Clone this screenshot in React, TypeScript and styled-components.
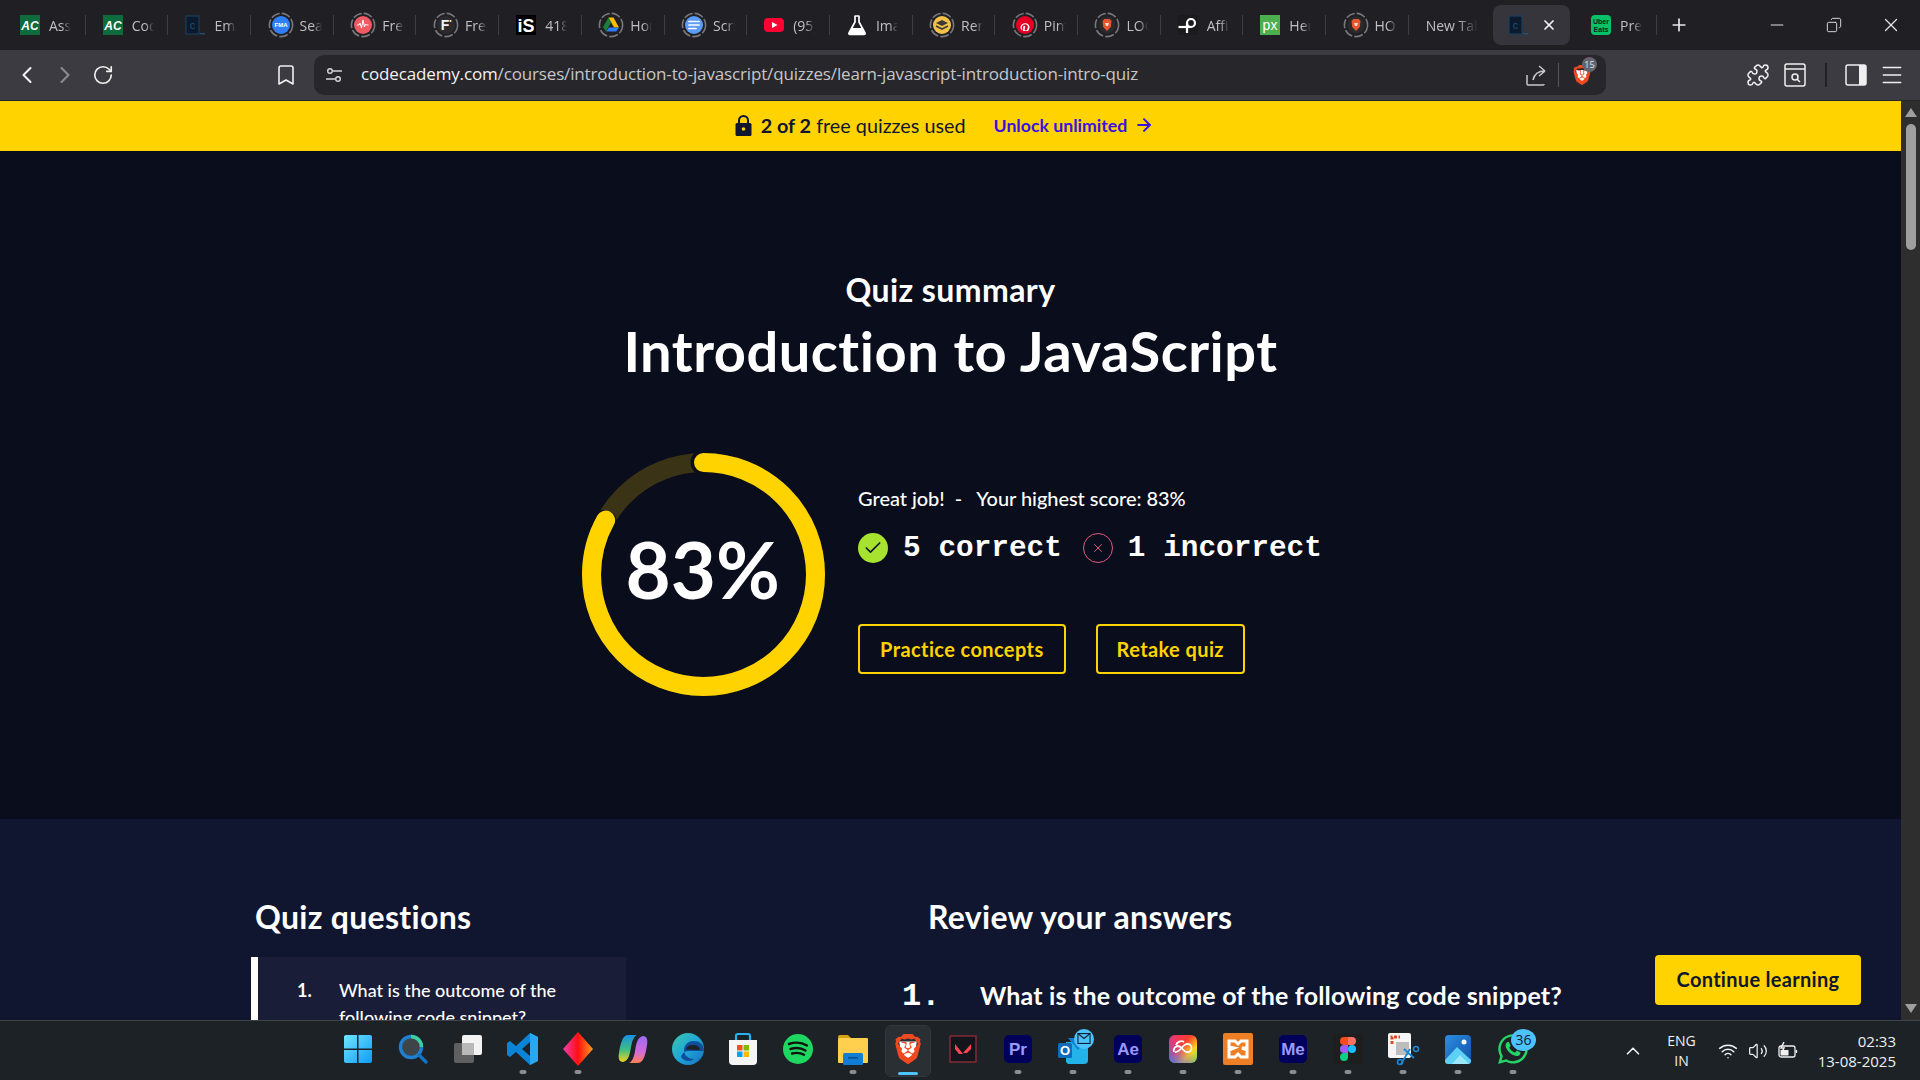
import React from "react";
import styled, { createGlobalStyle } from "styled-components";
import {
  ChevronLeft, ChevronRight, RotateCw, Bookmark, Puzzle, Menu, X, Plus, Minus,
  Copy, Wifi, Volume2, ChevronUp, ArrowRight, Check,
} from "lucide-react";
import { SiBrave } from "react-icons/si";
import { FaPinterestP, FaWhatsapp } from "react-icons/fa";

const Global = createGlobalStyle`
  html, body { margin: 0; padding: 0; overflow: hidden; background: #0a0d1c; }
  * { box-sizing: border-box; }
`;

const sans = `"Lato", "Liberation Sans", sans-serif`;
const ui = `"Open Sans", "Noto Sans", sans-serif`;
const mono = `"Liberation Mono", "DejaVu Sans Mono", monospace`;

const Shell = styled.div`
  width: 100%; height: 100vh; display: flex; flex-direction: column; overflow: hidden; position: relative;
  font-family: ${sans}; font-variant-ligatures: none;
`;
const TabStrip = styled.div`
  height: 50px; flex: none; background: #1f1f24; display: flex; align-items: center; padding-left: 3px;
`;
const Tab = styled.div<{ $active?: boolean; $sep?: boolean }>`
  width: 82.7px; flex: none; display: flex; align-items: center; gap: 9px; padding-left: 17px; position: relative;
  height: ${p => (p.$sep ? 20 : 40)}px;
  border-right: 1px solid ${p => (p.$sep ? "#3e3e44" : "transparent")};
  ${p => (p.$active ? "width: 77px; margin: 0 3.7px 0 2px; padding-left: 15px; border-radius: 8px; background: #35353b;" : "")}
`;
const Fav = styled.span<{ $ring?: boolean }>`
  width: 20px; height: 20px; flex: none; display: flex; align-items: center; justify-content: center; position: relative;
  margin-left: ${p => (p.$ring ? 2.5 : 0)}px;
  svg { flex: none; }
`;
const TabText = styled.span<{ $wide?: boolean }>`
  font: 400 14px ${ui}; color: #c0c0c4; white-space: nowrap; overflow: hidden; width: 22px; flex: none;
  -webkit-mask-image: linear-gradient(90deg, #000 60%, transparent);
  mask-image: linear-gradient(90deg, #000 60%, transparent);
  ${p => (p.$wide ? "width: 52px;" : "")}
`;
const CloseTab = styled.span`
  display: flex; margin-left: 4px; color: #f2f2f2;
`;
const PlusBtn = styled.div`
  display: flex; margin-left: 12px; color: #e8e8e8;
`;
const WinControls = styled.div`
  margin-left: auto; display: flex; color: #e4e4e4; height: 50px; align-items: center; padding-right: 1px;
`;
const WinBtn = styled.div`
  width: 57px; display: flex; justify-content: center; align-items: center;
`;
const Toolbar = styled.div`
  height: 51px; flex: none; background: #3b3b41; display: flex; align-items: flex-start; padding-top: 5px; border-bottom: 1px solid #26262b;
  color: #f0f0f0;
`;
const NavGroup = styled.div`
  display: flex; align-items: center; height: 40px; width: 314px; padding-left: 12px;
`;
const NavBtn = styled.div<{ $dim?: boolean; $ml?: number }>`
  width: 30px; height: 30px; display: flex; align-items: center; justify-content: center; margin-right: 8px;
  color: ${p => (p.$dim ? "#8a8a8f" : "#f0f0f0")};
  margin-left: ${p => p.$ml ?? 0}px;
`;
const UrlBar = styled.div`
  width: 1292px; height: 40px; background: #26262b; border-radius: 10px; display: flex; align-items: center; padding-left: 11px; flex: none;
`;
const UrlText = styled.div`
  font: 400 17px/38px ${ui}; height: 40px; color: #c6c6ca; margin-left: 18px; letter-spacing: -0.15px; white-space: nowrap;
  b { font-weight: 400; color: #f2f2f2; }
`;
const UrlRight = styled.div`
  margin-left: auto; display: flex; align-items: center; color: #c9c9cc; padding-right: 11px;
`;
const UrlSep = styled.div`
  width: 1px; height: 24px; background: #55555a; margin: 0 13px 0 11px;
`;
const ShieldWrap = styled.div`
  position: relative; width: 20px; height: 26px; margin-right: 3px; display: flex; align-items: center; justify-content: center;
`;
const Count = styled.span`
  position: absolute; top: -5px; left: 10px; width: 15px; height: 15px; border-radius: 50%; background: #62646e; color: #e4e4e6;
  font: 400 9px ${ui}; display: flex; align-items: center; justify-content: center;
`;
const ToolRight = styled.div`
  display: flex; align-items: center; height: 40px; margin-left: 141px; color: #f0f0f0;
`;
const ToolIcon = styled.div<{ $w: number }>`
  width: ${p => p.$w}px; display: flex; justify-content: center; align-items: center;
  svg { flex: none; }
`;
const ToolSep = styled.div`
  width: 2px; height: 24px; background: #222226; margin-left: 4px;
`;
const Main = styled.div`
  flex: 1; min-height: 0; display: flex; overflow: hidden;
`;
const Page = styled.div`
  flex: 1; min-width: 0; display: flex; flex-direction: column; overflow: hidden; position: relative;
`;
const Notice = styled.div`
  height: 50px; flex: none; background: #ffd300; display: flex; align-items: center; justify-content: center; padding: 0 12px 2px 0;
  color: #10162f; font: 400 19.8px ${sans};
  b { font-weight: 700; }
`;
const LockIcon = styled.span`display: flex; margin-right: 9px;`;
const Unlock = styled.span`
  margin-left: 28px; color: #3a10e5; font: 700 17.7px ${sans}; display: flex; align-items: center; gap: 7px;
`;
const Hero = styled.section`
  height: 668px; flex: none; background: #0a0d1c; display: flex; flex-direction: column; align-items: center; padding-top: 119px; color: #fff;
`;
const Kicker = styled.div`
  font: 700 32px/40px ${sans}; text-align: center; letter-spacing: 0.4px;
`;
const Title = styled.h1`
  margin: 7px 0 0; font: 700 56px/68px ${sans}; text-align: center; letter-spacing: 0.52px;
`;
const ScoreRow = styled.div`
  display: flex; margin-top: 68px; gap: 33px; padding-left: 3px;
`;
const Ring = styled.div`
  width: 243px; height: 243px; position: relative; flex: none; display: flex; align-items: center; justify-content: center;
  svg { position: absolute; inset: 0; }
`;
const Percent = styled.span`
  position: relative; font: 700 78px ${sans}; color: #fff; margin: -12px 2px 0 0;
`;
const Details = styled.div`
  display: flex; flex-direction: column; padding-top: 29px; align-items: flex-start;
`;
const Praise = styled.div`
  font: 500 20px/32px ${sans}; color: #fff; white-space: pre; letter-spacing: -0.05px;
`;
const Tally = styled.div`
  display: flex; align-items: center; margin-top: 14px; height: 40px; font: 700 29.4px ${mono}; color: #fff;
`;
const TallyItem = styled.span<{ $ml?: number }>`
  display: flex; align-items: center; gap: 15px; margin-left: ${p => p.$ml ?? 0}px;
`;
const CircleIcon = styled.span<{ $kind: "ok" | "bad" }>`
  width: 30px; height: 30px; border-radius: 50%; display: flex; align-items: center; justify-content: center;
  background: ${p => (p.$kind === "ok" ? "#a6e22e" : "transparent")};
  border: ${p => (p.$kind === "ok" ? "none" : "1.5px solid #e0597f")};
  color: ${p => (p.$kind === "ok" ? "#10162f" : "#e0597f")};
`;
const Actions = styled.div`
  display: flex; gap: 30px; margin-top: 56px;
`;
const Outline = styled.button<{ $pad: number }>`
  height: 50px; padding: 0 ${p => p.$pad}px; background: transparent; border: 2px solid #ffd300; border-radius: 4px; color: #ffd300;
  font: 700 20px ${sans}; letter-spacing: 0.4px;
`;
const Lower = styled.section`
  flex: 1; background: #10162f; display: flex; padding: 0 0 0 251px; color: #fff; overflow: hidden;
`;
const Side = styled.div`
  width: 375px; flex: none; padding-top: 78px;
`;
const H2 = styled.h2<{ $ml?: number }>`
  margin: 0 0 0 ${p => p.$ml ?? 4}px; font: 700 32px/40px ${sans}; letter-spacing: 0.3px;
`;
const QuestionCard = styled.div`
  margin-top: 20px; background: #191d38; border-left: 7px solid #fff; padding: 20px 30px 20px 39px; display: flex; height: 100px;
`;
const QNum = styled.span`
  font: 700 18px/27px ${sans}; width: 42px; flex: none;
`;
const QText = styled.span`
  font: 500 18px/27px ${sans};
`;
const Review = styled.div`
  margin-left: 277px; padding-top: 78px; flex: 1;
`;
const AnswerRow = styled.div`
  display: flex; align-items: baseline; margin-top: 41px;
`;
const ANum = styled.span`
  font: 700 32px ${mono}; width: 78px; flex: none; margin-left: -1px;
`;
const AText = styled.span`
  font: 700 25px ${sans}; white-space: nowrap; letter-spacing: 0.18px;
`;
const Continue = styled.button`
  position: absolute; right: 40px; bottom: 15px; width: 206px; height: 50px; border: none; border-radius: 4px; background: #ffd300; color: #10162f;
  font: 700 20px ${sans}; letter-spacing: 0.3px; padding: 0 0 2px;
`;
const Scrollbar = styled.div`
  width: 19px; flex: none; background: #2e2e2e; display: flex; flex-direction: column; align-items: center; padding-top: 7px;
`;
const Arrow = styled.div<{ $down?: boolean }>`
  width: 0; height: 0; border-left: 6.5px solid transparent; border-right: 6.5px solid transparent;
  ${p => (p.$down ? "border-top: 9px solid #9f9f9f; margin-top: auto; margin-bottom: 7px;" : "border-bottom: 9px solid #9f9f9f;")}
`;
const Thumb = styled.div`
  width: 10px; height: 126px; background: #9f9f9f; border-radius: 5px; margin-top: 7px;
`;
const Taskbar = styled.footer`
  height: 60px; flex: none; border-top: 1px solid #3f4447; background: #1c2226; display: flex; align-items: center; padding-left: 330px; color: #fff;
`;
const TaskItem = styled.div<{ $active?: boolean }>`
  width: 55px; height: 50px; flex: none; position: relative; display: flex; align-items: center; justify-content: center; padding-bottom: 3px;
  ${p => (p.$active ? "background: #2a2f33; border-radius: 5px; width: 44px; margin: 0 5.5px; outline: 1px solid #33383c;" : "")}
`;
const Dot = styled.span<{ $active?: boolean }>`
  position: absolute; left: 50%; bottom: ${p => (p.$active ? 1 : 2)}px; transform: translateX(-50%);
  width: ${p => (p.$active ? 20 : 7)}px; height: ${p => (p.$active ? 3 : 4)}px; border-radius: 2px; background: ${p => (p.$active ? "#4cc2ff" : "#8a8e91")};
`;
const TaskBadge = styled.span<{ $wide?: boolean }>`
  position: absolute; top: 3px; right: ${p => (p.$wide ? 4 : 6.5)}px; width: ${p => (p.$wide ? 25 : 20)}px; height: ${p => (p.$wide ? 22 : 20)}px;
  border-radius: 50%; background: #4cc2ff; color: #10202c;
  font: 400 14px ${ui}; display: flex; align-items: center; justify-content: center;
`;
const Tray = styled.div`
  margin-left: auto; display: flex; align-items: center; padding-right: 24px; color: #eef0f1; font: 400 14px/20px ${ui};
`;
const TrayLang = styled.div`
  text-align: center; margin: 0 22px 0 23px;
`;
const TrayIcons = styled.div`
  display: flex; align-items: center; gap: 10px;
`;
const Clock = styled.div`
  text-align: right; margin-left: 20px; font-size: 15px;
`;

type FavKind = "ac" | "cc" | "fma" | "wave" | "f" | "is" | "drive" | "docs" | "yt" | "flask" | "ren" | "pin" | "lion" | "aff" | "px" | "uber";

const ringKinds: FavKind[] = ["fma", "wave", "f", "drive", "docs", "ren", "pin", "lion"];

const DashRing = () => (
  <circle cx="13" cy="13" r="11.6" fill="none" stroke="#77777c" strokeWidth="1.6" strokeDasharray="9 2" />
);

const FavSvg = ({ children, ring }: { children: React.ReactNode; ring?: boolean }) => (
  <svg width="26" height="26" viewBox="0 0 26 26">
    {ring && <DashRing />}
    {children}
  </svg>
);

const Favicon = ({ kind }: { kind: FavKind }) => {
  const S = FavSvg;
  switch (kind) {
    case "ac":
      return (
        <S>
          <rect x="3" y="3" width="20" height="20" fill="#0f6b3e" />
          <text x="13" y="18" textAnchor="middle" fontFamily="Liberation Sans" fontWeight="700" fontStyle="italic" fontSize="12" fill="#fff">AC</text>
        </S>
      );
    case "cc":
      return (
        <S>
          <rect x="4" y="4" width="13" height="18" fill="#0c1a2c" stroke="#1c3f5e" strokeWidth="1.2" />
          <text x="10.5" y="17" textAnchor="middle" fontFamily="Liberation Sans" fontSize="11" fill="#1f5178">c</text>
          <rect x="18" y="21" width="5" height="1.4" fill="#1f5178" />
        </S>
      );
    case "fma":
      return (
        <S ring>
          <circle cx="13" cy="13" r="9" fill="#2f7ff8" />
          <text x="13" y="15.2" textAnchor="middle" fontFamily="Liberation Sans" fontWeight="700" fontSize="6" fill="#fff">FMA</text>
        </S>
      );
    case "wave":
      return (
        <S ring>
          <circle cx="13" cy="13" r="9" fill="#ef5a63" />
          <path d="M7 13h2l1-2 1.5 5 1.5-8 1.5 7 1-3 1 1h2" fill="none" stroke="#fff" strokeWidth="1" />
        </S>
      );
    case "f":
      return (
        <S ring>
          <circle cx="13" cy="13" r="9" fill="#2b2b2e" />
          <text x="12" y="18" textAnchor="middle" fontFamily="Liberation Sans" fontWeight="700" fontSize="14" fill="#f2f2f2">F</text>
          <circle cx="17.5" cy="9" r="1" fill="#f2f2f2" />
        </S>
      );
    case "is":
      return (
        <S>
          <rect x="3" y="3" width="20" height="20" fill="#000" />
          <text x="13" y="20" textAnchor="middle" fontFamily="Liberation Sans" fontWeight="700" fontSize="18" fill="#fff">iS</text>
        </S>
      );
    case "drive":
      return (
        <S ring>
          <path d="M10.5 5.5h5l5.5 10h-5z" fill="#fbbc04" />
          <path d="M10.5 5.5l2.5 5-5 9-3-4.5z" fill="#188038" />
          <path d="M8.3 19.5l2.7-4h10l-2.7 4z" fill="#2f7ff8" />
        </S>
      );
    case "docs":
      return (
        <S ring>
          <circle cx="13" cy="13" r="9" fill="#5b9cf6" />
          <path d="M8 9.5h10M8 13h10M8 16.5h7" stroke="#fff" strokeWidth="1.7" strokeLinecap="round" />
        </S>
      );
    case "yt":
      return (
        <S>
          <rect x="3" y="6" width="20" height="14" rx="4" fill="#ff0033" />
          <path d="M11 10l5.5 3-5.5 3z" fill="#fff" />
        </S>
      );
    case "flask":
      return (
        <S>
          <path d="M10.5 4h5M11 4v6L5 21a1 1 0 0 0 1 1.5h14a1 1 0 0 0 1-1.5l-6-11V4" fill="none" stroke="#fff" strokeWidth="1.7" />
          <path d="M8 16h10l3 6H5z" fill="#fff" />
        </S>
      );
    case "ren":
      return (
        <S ring>
          <circle cx="13" cy="13" r="9" fill="#f4c24b" />
          <path d="M13 8l6 3-6 3-6-3z" fill="#3c3a33" />
          <path d="M7 14l6 3 6-3" fill="none" stroke="#3c3a33" strokeWidth="1.6" />
        </S>
      );
    case "pin":
      return (
        <S ring>
          <circle cx="13" cy="13" r="9" fill="#e60023" />
          <foreignObject x="7" y="7" width="12" height="12">
            <FaPinterestP size={12} color="#fff" />
          </foreignObject>
        </S>
      );
    case "lion":
      return (
        <S ring>
          <circle cx="13" cy="13" r="8.5" fill="#2b2b2e" />
          <path d="M8.5 9l2-2h5l2 2-.7 6L13 19l-3.8-4z" fill="#e8562e" />
          <path d="M11 11h4l-1 3h-2z" fill="#f6d9cd" />
        </S>
      );
    case "aff":
      return (
        <S>
          <rect x="3" y="3" width="20" height="20" rx="3" fill="#1b1b1d" />
          <path d="M3.5 15h12" stroke="#fff" strokeWidth="2.2" />
          <circle cx="16" cy="11" r="4" fill="none" stroke="#fff" strokeWidth="2.2" />
          <path d="M12 11v10" stroke="#fff" strokeWidth="2.2" />
        </S>
      );
    case "px":
      return (
        <S>
          <rect x="3" y="3" width="20" height="20" fill="#4caf50" />
          <text x="13" y="18" textAnchor="middle" fontFamily="Liberation Sans" fontSize="14" fill="#fff">px</text>
        </S>
      );
    case "uber":
      return (
        <S>
          <rect x="3" y="3" width="20" height="20" rx="4" fill="#06c167" />
          <text x="13" y="12" textAnchor="middle" fontFamily="Liberation Sans" fontWeight="700" fontSize="7" fill="#10221a">Uber</text>
          <text x="13" y="19.5" textAnchor="middle" fontFamily="Liberation Sans" fontWeight="700" fontSize="7" fill="#10221a">Eats</text>
        </S>
      );
  }
};

const tabs: { kind?: FavKind; text: string; active?: boolean; sep?: boolean }[] = [
  { kind: "ac", text: "Assignment", sep: true },
  { kind: "ac", text: "Codecademy", sep: true },
  { kind: "cc", text: "Email", sep: true },
  { kind: "fma", text: "Search", sep: true },
  { kind: "wave", text: "Free", sep: true },
  { kind: "f", text: "Free", sep: true },
  { kind: "is", text: "418", sep: true },
  { kind: "drive", text: "Home", sep: true },
  { kind: "docs", text: "Script", sep: true },
  { kind: "yt", text: "(95)", sep: true },
  { kind: "flask", text: "Image", sep: true },
  { kind: "ren", text: "Render", sep: true },
  { kind: "pin", text: "Pinterest", sep: true },
  { kind: "lion", text: "LOGO", sep: true },
  { kind: "aff", text: "Affinity", sep: true },
  { kind: "px", text: "Hero", sep: true },
  { kind: "lion", text: "HOME", sep: true },
  { text: "New Tab" },
  { kind: "cc", text: "", active: true },
  { kind: "uber", text: "Premium", sep: true },
];

const I = ({ children }: { children: React.ReactNode }) => (
  <svg width="34" height="34" viewBox="0 0 34 34">{children}</svg>
);

const BraveMark = ({ size = 30 }: { size?: number }) => (
  <svg width={size} height={size} viewBox="0 0 24 24">
    <path d="M5 6h14l-1.5 11L12 22l-5.5-5z" fill="#fff" />
    <foreignObject x="0" y="0" width="24" height="24">
      <SiBrave size={24} color="#f1491f" />
    </foreignObject>
  </svg>
);

const AppText = ({ t }: { t: string }) => (
  <I>
    <rect x="3" y="3" width="28" height="28" rx="5" fill="#00005b" />
    <text x="17" y="23" textAnchor="middle" fontFamily="Liberation Sans" fontWeight="700" fontSize="17" fill="#9999ff">{t}</text>
  </I>
);

const taskIcons: { key: string; node: React.ReactNode; dot?: boolean; active?: boolean; badge?: string }[] = [
  { key: "win", node: (
    <I>
      <defs><linearGradient id="w" x1="0" y1="0" x2="1" y2="1"><stop offset="0" stopColor="#6fe6ff" /><stop offset="1" stopColor="#0f9cf5" /></linearGradient></defs>
      <path d="M3 5a2 2 0 0 1 2-2h11v13.5H3zM17.5 3H29a2 2 0 0 1 2 2v11.5H17.5zM3 18h13v13H5a2 2 0 0 1-2-2zM17.5 18H31v11a2 2 0 0 1-2 2H17.5z" fill="url(#w)" />
    </I>) },
  { key: "search", node: (
    <I>
      <circle cx="15" cy="15" r="10.5" fill="#3d4549" stroke="#1f7fd0" strokeWidth="3.4" />
      <path d="M15 4.5A10.5 10.5 0 0 1 25.5 15" fill="none" stroke="#3fcf9c" strokeWidth="3.4" />
      <path d="M23 23l7 7" stroke="#1473c4" strokeWidth="3.4" strokeLinecap="round" />
    </I>) },
  { key: "view", node: (
    <I>
      <rect x="3" y="11" width="20" height="20" rx="2" fill="#5f5f5f" />
      <rect x="11" y="3" width="20" height="20" rx="2" fill="#f3f3f3" />
      <rect x="11" y="11" width="12" height="12" fill="#b9b9b9" />
    </I>) },
  { key: "code", dot: true, node: (
    <I>
      <path d="M24 1l8 4v24l-8 4L10 20l-6 5-3-2v-12l3-2 6 5zM24 10l-8 7 8 7z" fill="#0a84d6" />
      <path d="M24 1l8 4v24l-8 4z" fill="#2aa7ee" />
    </I>) },
  { key: "diamond", dot: true, node: (
    <I>
      <defs><linearGradient id="d" x1="0" y1="0" x2="1" y2="0"><stop offset="0" stopColor="#f23bb0" /><stop offset="0.5" stopColor="#ff1010" /><stop offset="1" stopColor="#ff9a1f" /></linearGradient></defs>
      <path d="M17 0l15 17-15 17L2 17z" fill="url(#d)" />
    </I>) },
  { key: "copilot", node: (
    <I>
      <defs>
        <linearGradient id="c1" x1="0" y1="0" x2="0" y2="1"><stop offset="0" stopColor="#1a8fe8" /><stop offset="0.55" stopColor="#3fc07e" /><stop offset="1" stopColor="#f5d11f" /></linearGradient>
        <linearGradient id="c2" x1="0" y1="0" x2="0" y2="1"><stop offset="0" stopColor="#9a6bf0" /><stop offset="0.6" stopColor="#d46bd8" /><stop offset="1" stopColor="#ff7f50" /></linearGradient>
      </defs>
      <path d="M12 3h9c-3 1-5 6-6 12s-2 14-8 15c-4 0-5-4-4-9 1-7 3-18 9-18z" fill="url(#c1)" />
      <path d="M22 31h-9c3-1 5-6 6-12s2-14 8-15c4 0 5 4 4 9-1 7-3 18-9 18z" fill="url(#c2)" />
    </I>) },
  { key: "edge", node: (
    <I>
      <defs><linearGradient id="e" x1="0" y1="0" x2="1" y2="1"><stop offset="0" stopColor="#3bc9a8" /><stop offset="0.5" stopColor="#20a6d8" /><stop offset="1" stopColor="#1470c2" /></linearGradient></defs>
      <circle cx="17" cy="17" r="16" fill="url(#e)" />
      <path d="M33 19c0-7-5-10-10-10-7 0-10 5-10 9 0 6 5 9 10 9-3 3-10 3-13-2 1-4 4-6 8-6" fill="#0d4f9a" />
      <path d="M15 18c0-3 3-5 7-5 4 0 7 2 7 5h-6c-3 0-6-1-8 0z" fill="#1c2226" />
    </I>) },
  { key: "store", node: (
    <I>
      <path d="M10 9V4a2 2 0 0 1 2-2h10a2 2 0 0 1 2 2v5" fill="none" stroke="#25b4ee" strokeWidth="2.2" />
      <path d="M3 8h28v21a4 4 0 0 1-4 4H7a4 4 0 0 1-4-4z" fill="#f5f5f5" />
      <rect x="11" y="13" width="5.5" height="5.5" fill="#f25022" />
      <rect x="17.5" y="13" width="5.5" height="5.5" fill="#7fba00" />
      <rect x="11" y="19.5" width="5.5" height="5.5" fill="#00a4ef" />
      <rect x="17.5" y="19.5" width="5.5" height="5.5" fill="#ffb900" />
    </I>) },
  { key: "spotify", node: (
    <I>
      <circle cx="17" cy="17" r="15" fill="#1ed760" />
      <path d="M8 12c6-2 13-1.5 18 1.5M9.5 17c5-1.5 11-1 15 1.5M11 21.5c4-1 8.5-.8 12 1.2" fill="none" stroke="#121212" strokeWidth="2.4" strokeLinecap="round" />
    </I>) },
  { key: "files", dot: true, node: (
    <I>
      <path d="M2 5a2 2 0 0 1 2-2h8l3 3h-13z" fill="#d6a20f" />
      <rect x="2" y="6" width="30" height="25" rx="1" fill="#ffcf4d" />
      <rect x="7" y="21" width="20" height="12" rx="1.5" fill="#0f7ed4" />
      <rect x="12" y="25" width="10" height="1.6" fill="#0a4f8a" />
    </I>) },
  { key: "brave", active: true, dot: true, node: <BraveMark /> },
  { key: "valorant", node: (
    <I>
      <rect x="4" y="4" width="26" height="26" fill="#13151c" stroke="#8a2b35" strokeWidth="1.4" />
      <path d="M9 12l8 10h-4l-4-5zM25 12v5l-4 4h-4z" fill="#ff4655" />
    </I>) },
  { key: "pr", dot: true, node: <AppText t="Pr" /> },
  { key: "outlook", dot: true, badge: "mail", node: (
    <I>
      <path d="M10 10h22v18a4 4 0 0 1-4 4H12l-2-2z" fill="#24b3e8" />
      <path d="M12 6h20l-10 12z" fill="#0f7ed4" />
      <rect x="2" y="11" width="14" height="15" rx="1.5" fill="#0f6cbd" />
      <text x="9" y="23" textAnchor="middle" fontFamily="Liberation Sans" fontWeight="700" fontSize="13" fill="#fff">O</text>
    </I>) },
  { key: "ae", dot: true, node: <AppText t="Ae" /> },
  { key: "cc", dot: true, node: (
    <I>
      <defs>
        <linearGradient id="cc" x1="0" y1="0" x2="1" y2="1"><stop offset="0" stopColor="#e8327c" /><stop offset="0.4" stopColor="#ff3d2e" /><stop offset="0.7" stopColor="#f9d423" /><stop offset="1" stopColor="#6fd85a" /></linearGradient>
        <linearGradient id="cc2" x1="0" y1="1" x2="0.6" y2="0.4"><stop offset="0" stopColor="#2f7cf0" /><stop offset="1" stopColor="#c83ad0" stopOpacity="0" /></linearGradient>
      </defs>
      <rect x="3" y="3" width="28" height="28" rx="6" fill="url(#cc)" />
      <rect x="3" y="3" width="28" height="28" rx="6" fill="url(#cc2)" />
      <path d="M8 20a4.500 4.500 0 0 1 4-6c4 0 5 6 9 6a4 4 0 0 0 1-8c-5-1-8 9-13 8M10 13c1-3 5-5 8-3" fill="none" stroke="#fff" strokeWidth="1.800" />
    </I>) },
  { key: "xampp", dot: true, node: (
    <I>
      <rect x="2" y="1" width="30" height="32" rx="2" fill="#ee7f24" />
      <path d="M8 9h6l3 3 3-3h6v7h-5l5 2v7h-6l-3-3-3 3H8v-7l5-2-5-1z" fill="none" stroke="#fff" strokeWidth="3" />
    </I>) },
  { key: "me", dot: true, node: <AppText t="Me" /> },
  { key: "figma", dot: true, node: (
    <I>
      <rect x="2" y="2" width="30" height="30" fill="#1e1e1e" />
      <path d="M17 5h-4a4 4 0 0 0 0 8h4z" fill="#f24e1e" />
      <path d="M17 5h4a4 4 0 0 1 0 8h-4z" fill="#ff7262" />
      <path d="M17 13h-4a4 4 0 0 0 0 8h4z" fill="#a259ff" />
      <circle cx="21" cy="17" r="4" fill="#1abcfe" />
      <path d="M13 21h4v4a4 4 0 1 1-4-4z" fill="#0acf83" />
    </I>) },
  { key: "snip", dot: true, node: (
    <I>
      <rect x="2" y="1" width="23" height="25" rx="2" fill="#f5f5f5" />
      <path d="M6 12V5h8" fill="none" stroke="#e0482a" strokeWidth="3" strokeDasharray="3 1.5" />
      <rect x="10" y="10" width="13" height="13" fill="#bdbdbd" />
      <path d="M24 17l-9 15M18 17l10 9" stroke="#1c86d6" strokeWidth="1.8" />
      <circle cx="30" cy="17" r="2.5" fill="none" stroke="#1c86d6" strokeWidth="1.6" />
      <circle cx="14" cy="30" r="2.5" fill="none" stroke="#1c86d6" strokeWidth="1.6" />
    </I>) },
  { key: "photos", dot: true, node: (
    <I>
      <defs><linearGradient id="ph" x1="0" y1="0" x2="1" y2="1"><stop offset="0" stopColor="#2d8fe0" /><stop offset="1" stopColor="#0f4fa8" /></linearGradient></defs>
      <rect x="4" y="3" width="26" height="29" rx="4" fill="url(#ph)" />
      <circle cx="23" cy="10" r="2.5" fill="#fff" />
      <path d="M4 28l12-13 14 13v1a3 3 0 0 1-3 3H7a3 3 0 0 1-3-3z" fill="#5cd0f5" />
      <path d="M11 32l8-9 9 9z" fill="#9be6fb" />
    </I>) },
  { key: "whatsapp", dot: true, badge: "36", node: <FaWhatsapp size={34} color="#25d366" /> },
];

export default function App() {
  return (
    <Shell>
      <Global />
      <TabStrip>
        {tabs.map((t, i) => (
          <Tab key={i} $active={t.active} $sep={t.sep}>
            {t.kind && (
              <Fav $ring={ringKinds.includes(t.kind)}>
                <Favicon kind={t.kind} />
              </Fav>
            )}
            {t.text && <TabText $wide={!t.kind}>{t.text}</TabText>}
            {t.active && (
              <CloseTab>
                <X size={16} strokeWidth={2.6} />
              </CloseTab>
            )}
          </Tab>
        ))}
        <PlusBtn>
          <Plus size={20} strokeWidth={2} />
        </PlusBtn>
        <WinControls>
          <WinBtn><Minus size={20} strokeWidth={1.4} /></WinBtn>
          <WinBtn><Copy size={16} strokeWidth={1.4} style={{ transform: "scaleX(-1)" }} /></WinBtn>
          <WinBtn><X size={22} strokeWidth={1.3} /></WinBtn>
        </WinControls>
      </TabStrip>
      <Toolbar>
        <NavGroup>
          <NavBtn><ChevronLeft size={28} strokeWidth={1.8} /></NavBtn>
          <NavBtn $dim><ChevronRight size={28} strokeWidth={1.8} /></NavBtn>
          <NavBtn><RotateCw size={22} strokeWidth={1.8} /></NavBtn>
          <NavBtn $ml={145}><Bookmark size={24} strokeWidth={1.6} /></NavBtn>
        </NavGroup>
        <UrlBar>
          <svg width="18" height="18" viewBox="0 0 18 18" fill="none" stroke="#d6d6d8" strokeWidth="1.4">
            <circle cx="5" cy="5" r="2.3" />
            <path d="M8 5h9M1 13h9" />
            <circle cx="13" cy="13" r="2.3" />
          </svg>
          <UrlText>
            <b>codecademy.com</b>/courses/introduction-to-javascript/quizzes/learn-javascript-introduction-intro-quiz
          </UrlText>
          <UrlRight>
            <svg width="22" height="22" viewBox="0 0 22 22" fill="none" stroke="#c9c9cc" strokeWidth="1.5">
              <path d="M20 7l-6-5M20 7l-6 5M20 7c-7 0-11 4-12 9" />
              <path d="M2 11v9a1 1 0 0 0 1 1h15a1 1 0 0 0 1-1" />
            </svg>
            <UrlSep />
            <ShieldWrap>
              <BraveMark size={24} />
              <Count>15</Count>
            </ShieldWrap>
          </UrlRight>
        </UrlBar>
        <ToolRight>
          <ToolIcon $w={22}><Puzzle size={24} strokeWidth={1.5} /></ToolIcon>
          <ToolIcon $w={52}>
            <svg width="22" height="24" viewBox="0 0 22 24" fill="none" stroke="#f0f0f0" strokeWidth="1.5">
              <rect x="1" y="1" width="20" height="22" rx="2" />
              <path d="M1 6h20" />
              <circle cx="11" cy="14" r="3" />
              <path d="M13 16l3 3" />
            </svg>
          </ToolIcon>
          <ToolSep />
          <ToolIcon $w={58}>
            <svg width="22" height="22" viewBox="0 0 22 22" fill="none">
              <rect x="1" y="1" width="20" height="20" rx="2" stroke="#f0f0f0" strokeWidth="1.5" />
              <rect x="14" y="1" width="7" height="20" fill="#f0f0f0" />
            </svg>
          </ToolIcon>
          <ToolIcon $w={14}><Menu size={26} strokeWidth={1.4} /></ToolIcon>
        </ToolRight>
      </Toolbar>
      <Main>
        <Page>
          <Notice>
            <LockIcon>
              <svg width="17" height="21" viewBox="0 0 17 21">
                <path d="M4 9V5.500a4.500 4.500 0 0 1 9 0V9" fill="none" stroke="#10162f" strokeWidth="2" />
                <rect x="0.500" y="8" width="16" height="13" rx="1.500" fill="#10162f" />
                <circle cx="8.500" cy="14" r="1.800" fill="#ffd300" />
              </svg>
            </LockIcon>
            <span><b>2 of 2</b> free quizzes used</span>
            <Unlock>Unlock unlimited <ArrowRight size={20} strokeWidth={2.4} /></Unlock>
          </Notice>
          <Hero>
            <Kicker>Quiz summary</Kicker>
            <Title>Introduction to JavaScript</Title>
            <ScoreRow>
              <Ring>
                <svg width="243" height="243" viewBox="0 0 243 243">
                  <circle cx="121.5" cy="121.5" r="112" fill="none" stroke="#3b3316" strokeWidth="19" />
                  <circle cx="121.5" cy="9.5" r="13" fill="#0a0d1c" />
                  <circle cx="22" cy="70" r="13" fill="#0a0d1c" />
                  <circle
                    cx="121.5" cy="121.5" r="112" fill="none" stroke="#ffd300" strokeWidth="19" strokeLinecap="round"
                    strokeDasharray={`${2 * Math.PI * 112 * 0.83} ${2 * Math.PI * 112}`}
                    transform="rotate(-90 121.5 121.5)"
                  />
                </svg>
                <Percent>83%</Percent>
              </Ring>
              <Details>
                <Praise>{"Great job!  -   Your highest score: 83%"}</Praise>
                <Tally>
                  <TallyItem>
                    <CircleIcon $kind="ok"><Check size={20} strokeWidth={2} /></CircleIcon>
                    5 correct
                  </TallyItem>
                  <TallyItem $ml={21}>
                    <CircleIcon $kind="bad"><X size={14} strokeWidth={1.6} /></CircleIcon>
                    1 incorrect
                  </TallyItem>
                </Tally>
                <Actions>
                  <Outline $pad={20}>Practice concepts</Outline>
                  <Outline $pad={19}>Retake quiz</Outline>
                </Actions>
              </Details>
            </ScoreRow>
          </Hero>
          <Lower>
            <Side>
              <H2>Quiz questions</H2>
              <QuestionCard>
                <QNum>1.</QNum>
                <QText>What is the outcome of the following code snippet?</QText>
              </QuestionCard>
            </Side>
            <Review>
              <H2 $ml={25}>Review your answers</H2>
              <AnswerRow>
                <ANum>1.</ANum>
                <AText>What is the outcome of the following code snippet?</AText>
              </AnswerRow>
            </Review>
          </Lower>
          <Continue>Continue learning</Continue>
        </Page>
        <Scrollbar>
          <Arrow />
          <Thumb />
          <Arrow $down />
        </Scrollbar>
      </Main>
      <Taskbar>
        {taskIcons.map(t => (
          <TaskItem key={t.key} $active={t.active}>
            {t.node}
            {t.dot && <Dot $active={t.active} />}
            {t.badge && (
              <TaskBadge $wide={t.badge !== "mail"}>
                {t.badge === "mail" ? (
                  <svg width="14" height="11" viewBox="0 0 12 10" fill="none" stroke="#10202c" strokeWidth="1">
                    <rect x="0.5" y="0.5" width="11" height="9" />
                    <path d="M0.5 0.5L6 5l5.5-4.5" />
                  </svg>
                ) : t.badge}
              </TaskBadge>
            )}
          </TaskItem>
        ))}
        <Tray>
          <ChevronUp size={22} strokeWidth={1.8} />
          <TrayLang>ENG<br />IN</TrayLang>
          <TrayIcons>
            <Wifi size={20} strokeWidth={1.8} />
            <Volume2 size={20} strokeWidth={1.5} />
            <svg width="20" height="20" viewBox="0 0 20 20" fill="none" stroke="#eef0f1" strokeWidth="1.3">
              <rect x="1" y="5" width="16" height="11" rx="2" />
              <rect x="2.5" y="9" width="8" height="5.5" fill="#eef0f1" stroke="none" />
              <path d="M18.5 9v3" />
              <path d="M6 1L3 7h3l-2 4" strokeWidth="1.5" />
            </svg>
          </TrayIcons>
          <Clock>02:33<br />13-08-2025</Clock>
        </Tray>
      </Taskbar>
    </Shell>
  );
}
